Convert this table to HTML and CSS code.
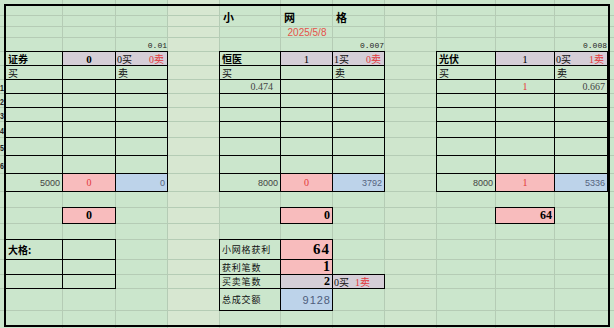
FILE: index.html
```html
<!DOCTYPE html>
<html>
<head>
<meta charset="utf-8">
<title>小网格</title>
<link rel="stylesheet" href="styles.css">
</head>
<body>
<div class="sheet">
  <div class="vl cA"></div>
  <div class="vl cB"></div>
  <div class="vl cC"></div>
  <div class="vl cD light"></div>
  <div class="vl cE"></div>
  <div class="vl cF"></div>
  <div class="vl cG"></div>
  <div class="vl cH light2"></div>
  <div class="vl cI"></div>
  <div class="vl cJ"></div>
  <div class="vl cK last"></div>

  <div class="hl r1"></div><div class="hl r2"></div><div class="hl r3"></div><div class="hl r4"></div>
  <div class="hl r5"></div><div class="hl r6"></div><div class="hl r7"></div><div class="hl r8"></div>
  <div class="hl r9"></div><div class="hl r10"></div><div class="hl r11"></div><div class="hl r12"></div>
  <div class="hl r13"></div><div class="hl r14"></div><div class="hl r15"></div><div class="hl r16"></div>
  <div class="hl r17"></div><div class="hl r18"></div><div class="hl r19"></div><div class="hl r20"></div>

  <div class="rn r7"><span>1</span></div>
  <div class="rn r8"><span>2</span></div>
  <div class="rn r9"><span>3</span></div>
  <div class="rn r10"><span>4</span></div>
  <div class="rn r11"><span>5</span></div>
  <div class="rn r12"><span>6</span></div>

  <div class="cell cE rT title">小</div>
  <div class="cell cF rT title">网</div>
  <div class="cell cG rT title">格</div>
  <div class="cell cF r3 C date">2025/5/8</div>
  <div class="cell cC r4 R mono">0.01</div>
  <div class="cell cG r4 R mono">0.007</div>
  <div class="cell cK r4 R mono">0.008</div>

  <!-- left table -->
  <div class="cell b cA r5 zhb">证券</div>
  <div class="cell b cB r5 grey C hnum bold">0</div>
  <div class="cell b cC r5 grey S bs"><span>0买</span><span class="red">0卖</span></div>
  <div class="cell b cA r6 zh">买</div>
  <div class="cell b cB r6"></div>
  <div class="cell b cC r6 zh">卖</div>
  <div class="cell b cA r7"></div><div class="cell b cB r7"></div><div class="cell b cC r7"></div>
  <div class="cell b cA r8"></div><div class="cell b cB r8"></div><div class="cell b cC r8"></div>
  <div class="cell b cA r9"></div><div class="cell b cB r9"></div><div class="cell b cC r9"></div>
  <div class="cell b cA r10"></div><div class="cell b cB r10"></div><div class="cell b cC r10"></div>
  <div class="cell b cA r11"></div><div class="cell b cB r11"></div><div class="cell b cC r11"></div>
  <div class="cell b cA r12"></div><div class="cell b cB r12"></div><div class="cell b cC r12"></div>
  <div class="cell b cA r13 R sans">5000</div>
  <div class="cell b cB r13 pink C num red">0</div>
  <div class="cell b cC r13 blue R sans bluetxt">0</div>

  <!-- middle table -->
  <div class="cell b cE r5 zhb">恒医</div>
  <div class="cell b cF r5 grey C hnum">1</div>
  <div class="cell b cG r5 grey S bs"><span>1买</span><span class="red">0卖</span></div>
  <div class="cell b cE r6 zh">买</div>
  <div class="cell b cF r6"></div>
  <div class="cell b cG r6 zh">卖</div>
  <div class="cell b cE r7 R num grey-t pr7">0.474</div><div class="cell b cF r7"></div><div class="cell b cG r7"></div>
  <div class="cell b cE r8"></div><div class="cell b cF r8"></div><div class="cell b cG r8"></div>
  <div class="cell b cE r9"></div><div class="cell b cF r9"></div><div class="cell b cG r9"></div>
  <div class="cell b cE r10"></div><div class="cell b cF r10"></div><div class="cell b cG r10"></div>
  <div class="cell b cE r11"></div><div class="cell b cF r11"></div><div class="cell b cG r11"></div>
  <div class="cell b cE r12"></div><div class="cell b cF r12"></div><div class="cell b cG r12"></div>
  <div class="cell b cE r13 R sans">8000</div>
  <div class="cell b cF r13 pink C num red">0</div>
  <div class="cell b cG r13 blue R sans bluetxt">3792</div>

  <!-- right table -->
  <div class="cell b cI r5 zhb">光伏</div>
  <div class="cell b cJ r5 grey C hnum">1</div>
  <div class="cell b cK r5 grey S bs"><span>0买</span><span class="red">1卖</span></div>
  <div class="cell b cI r6 zh">买</div>
  <div class="cell b cJ r6"></div>
  <div class="cell b cK r6 zh">卖</div>
  <div class="cell b cI r7"></div><div class="cell b cJ r7 C num red">1</div><div class="cell b cK r7 R num grey-t">0.667</div>
  <div class="cell b cI r8"></div><div class="cell b cJ r8"></div><div class="cell b cK r8"></div>
  <div class="cell b cI r9"></div><div class="cell b cJ r9"></div><div class="cell b cK r9"></div>
  <div class="cell b cI r10"></div><div class="cell b cJ r10"></div><div class="cell b cK r10"></div>
  <div class="cell b cI r11"></div><div class="cell b cJ r11"></div><div class="cell b cK r11"></div>
  <div class="cell b cI r12"></div><div class="cell b cJ r12"></div><div class="cell b cK r12"></div>
  <div class="cell b cI r13 R sans">8000</div>
  <div class="cell b cJ r13 pink C num red">1</div>
  <div class="cell b cK r13 blue R sans bluetxt">5336</div>

  <!-- result boxes -->
  <div class="cell b cB r15 pink C bnum">0</div>
  <div class="cell b cF r15 pink R bnum">0</div>
  <div class="cell b cJ r15 pink R bnum">64</div>

  <!-- 大格 table -->
  <div class="cell b cA r17 zhb">大格:</div>
  <div class="cell b cB r17"></div>
  <div class="cell b cA r18"></div>
  <div class="cell b cB r18"></div>
  <div class="cell b cA r19"></div>
  <div class="cell b cB r19"></div>

  <!-- summary table -->
  <div class="cell b cE r17 zhs">小网格获利</div>
  <div class="cell b cF r17 pink R bnum big">64</div>
  <div class="cell b cE r18 zhs">获利笔数</div>
  <div class="cell b cF r18 pink R bnum mid">1</div>
  <div class="cell b cE r19 zhs">买卖笔数</div>
  <div class="cell b cF r19 grey R bnum">2</div>
  <div class="cell b cG r19 grey bs gap"><span>0买</span><span class="red">1卖</span></div>
  <div class="cell b cE r20 zhs">总成交额</div>
  <div class="cell b cF r20 blue R total">9128</div>

  <div class="frame"></div>
</div>
</body>
</html>
```

FILE: styles.css
```css
* { box-sizing: border-box; margin: 0; padding: 0; }
html, body { width: 614px; height: 328px; overflow: hidden; }
body {
  background: #cbe6cc;
  font-family: "Liberation Serif", "Noto Sans CJK SC", serif;
  color: #111;
}
.sheet {
  display: grid;
  grid-template-columns: 4px 2px 57px 53px 52px 52px 61px 52px 52px 52px 59px 59px 53px 2px 4px;
  grid-template-rows: 4px 2px 10px 11px 11px 14px 14px 14px 14px 14px 14px 16px 18px 18px 18px 16px 16px 16px 20px 15px 14px 22px 14px 2px 1px;
  width: 614px;
  height: 328px;
}
.vl { grid-row: 1 / -1; border-right: 1px solid #b5ccb5; }
.vl.last { border-right: 0; }
.light { background: #d7e7d1; }
.light2 { background: #cfe6cd; }
.hl { grid-column: 1 / -1; border-bottom: 1px solid #b5ccb5; }
.frame { grid-column: 2 / 15; grid-row: 2 / 25; border: 2px solid #000; }

.cA { grid-column: 3; } .cB { grid-column: 4; } .cC { grid-column: 5; } .cD { grid-column: 6; }
.cE { grid-column: 7; } .cF { grid-column: 8; } .cG { grid-column: 9; } .cH { grid-column: 10; }
.cI { grid-column: 11; } .cJ { grid-column: 12; } .cK { grid-column: 13; }

.rT { grid-row: 3 / 5; }
.r1 { grid-row: 3; } .r2 { grid-row: 4; } .r3 { grid-row: 5; } .r4 { grid-row: 6; }
.r5 { grid-row: 7; } .r6 { grid-row: 8; } .r7 { grid-row: 9; } .r8 { grid-row: 10; }
.r9 { grid-row: 11; } .r10 { grid-row: 12; } .r11 { grid-row: 13; } .r12 { grid-row: 14; }
.r13 { grid-row: 15; } .r14 { grid-row: 16; } .r15 { grid-row: 17; } .r16 { grid-row: 18; }
.r17 { grid-row: 19; } .r18 { grid-row: 20; } .r19 { grid-row: 21; } .r20 { grid-row: 22; }
.r21 { grid-row: 23; }

.rn {
  grid-column: 1;
  display: flex;
  justify-content: center;
  align-items: center;
  font: bold 7px "Liberation Sans", sans-serif;
  line-height: 1;
  color: #222;
}
.rn span { flex: none; transform: scaleY(1.3); }

.cell {
  display: flex;
  align-items: center;
  white-space: nowrap;
  padding: 0 2px;
  font-size: 10px;
  line-height: 1;
  min-width: 0;
}
.b { border: 1px solid #000; margin: -1px 0 0 -1px; }
.R { justify-content: flex-end; }
.C { justify-content: center; }
.S { justify-content: space-between; }
.pr7 { padding-right: 7px; }

.pink { background: #f8bcbd; }
.blue { background: #bdd3ea; }
.grey { background: #d5ced7; }

.title { font: 700 11px "Noto Sans CJK SC", sans-serif; padding-left: 3px; color: #000; }
.date { font: 10px "Liberation Sans", sans-serif; color: #e5524a; }
.mono { font: 8px "Liberation Mono", monospace; color: #222; padding-right: 1px; }
.zhb { font: 700 10px "Noto Sans CJK SC", sans-serif; padding-left: 2px; color: #000; }
.zh { font: 400 10px "Noto Sans CJK SC", sans-serif; padding-left: 2px; color: #111; }
.zhs { font: 400 9px "Noto Sans CJK SC", sans-serif; letter-spacing: 0.8px; padding-left: 2px; color: #111; }
.hnum { font: 11px "Liberation Serif", serif; color: #000; }
.bold { font-weight: 700; }
.bs { font: 10px "Liberation Serif", "Noto Sans CJK SC", serif; padding: 0 3px 0 1px; color: #111; }
.gap span + span { margin-left: 6px; }
.num { font: 10px "Liberation Serif", serif; }
.grey-t { color: #444; }
.sans { font: 9px "Liberation Sans", sans-serif; color: #444; }
.bluetxt { color: #56647f; }
.total { font: 11px "Liberation Sans", sans-serif; letter-spacing: 1px; color: #4e5d7c; padding-right: 1px; }
.red { color: #e3393c; }
.bnum { font: 700 12px "Liberation Serif", serif; color: #000; }
.big { font-size: 15px; letter-spacing: 1px; }
.mid { font-size: 14px; }
```
